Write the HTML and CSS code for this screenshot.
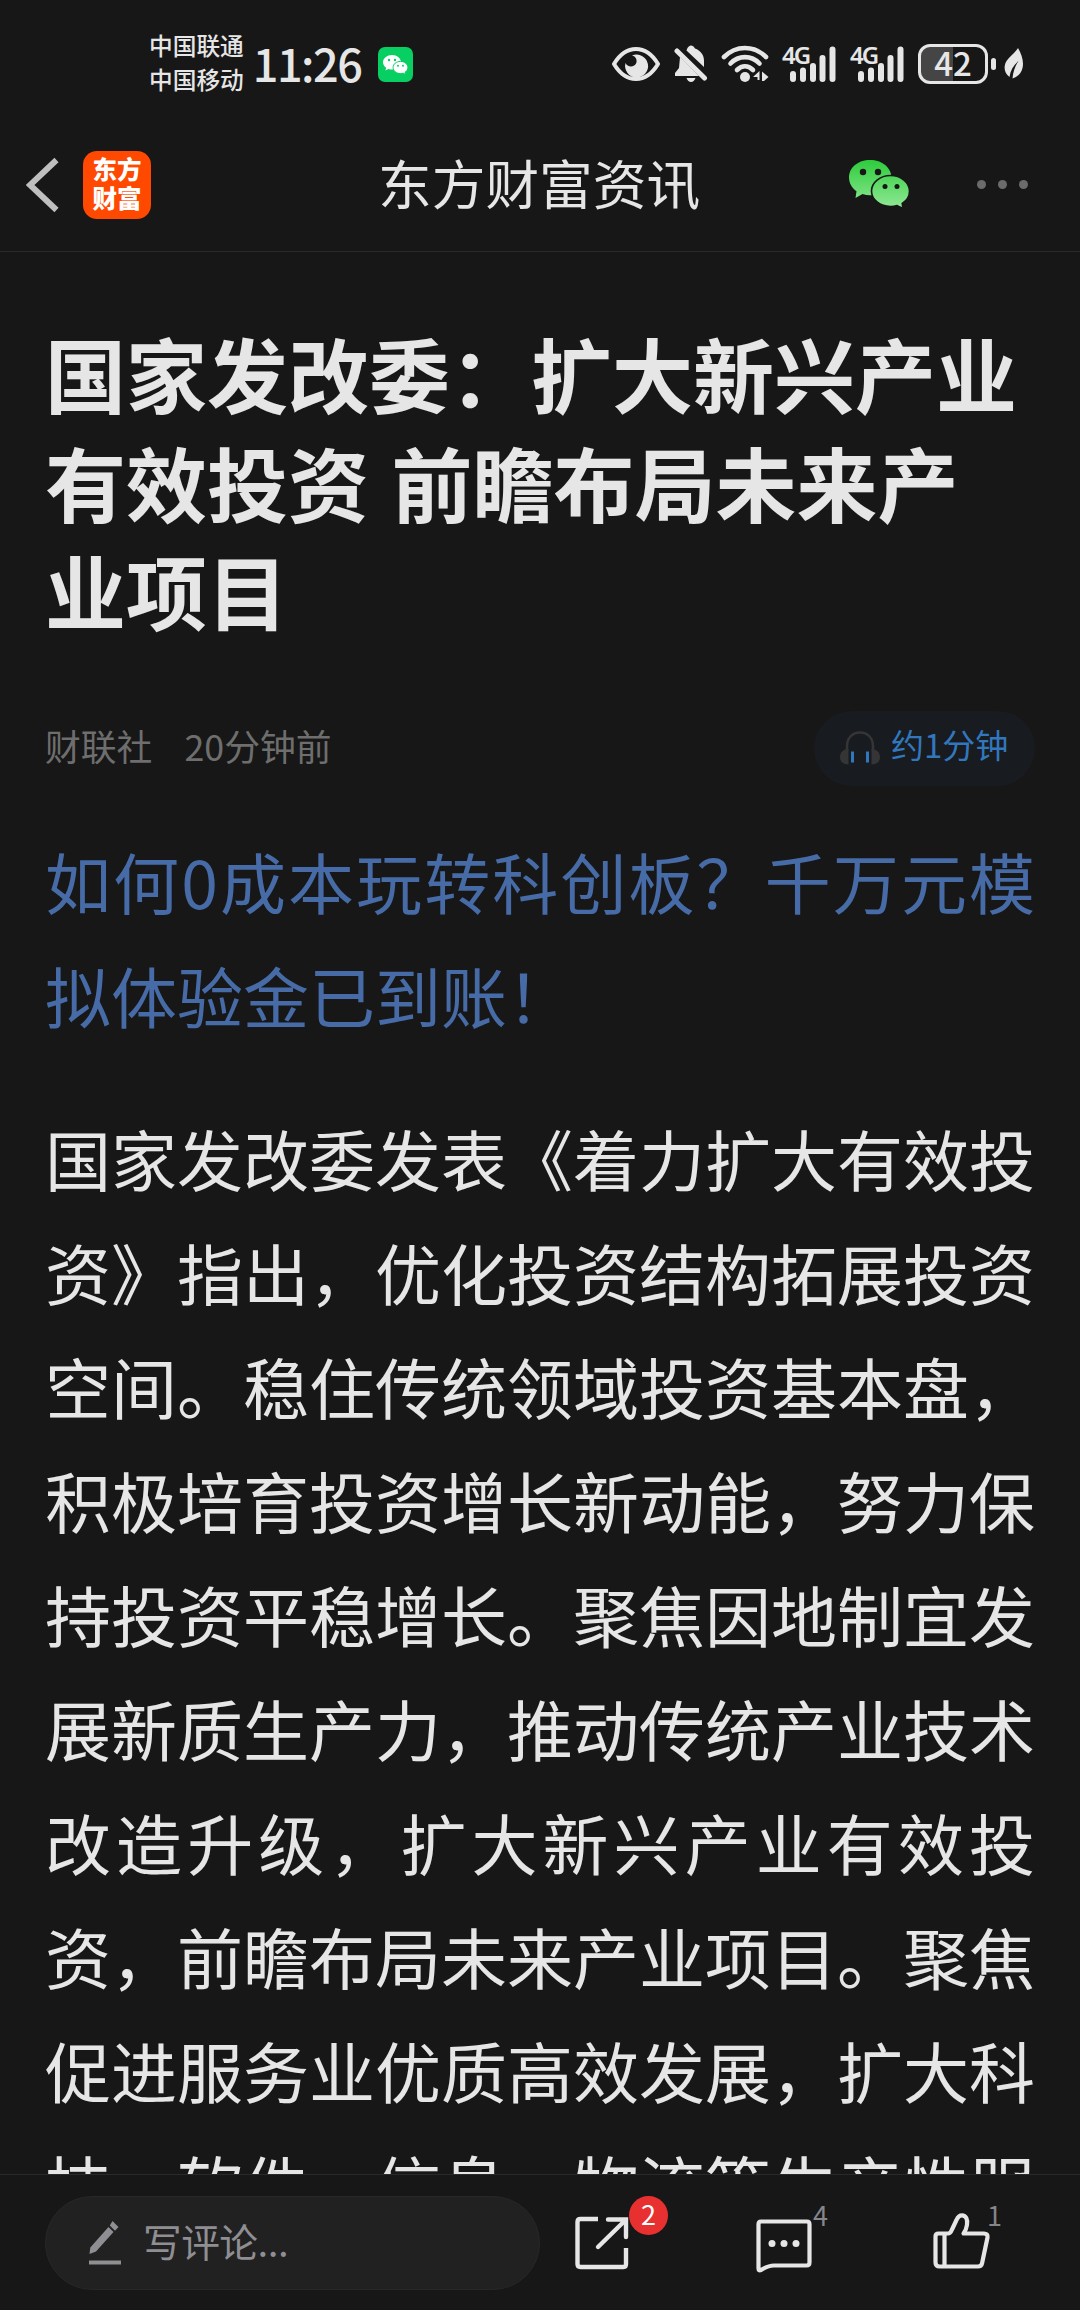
FILE: index.html
```
<!DOCTYPE html>
<html lang="zh-CN">
<head>
    <meta charset="UTF-8">
    <meta name="viewport" content="width=device-width, initial-scale=1.0">
    <title>东方财富资讯</title>
    <link rel="stylesheet" href="styles.css">
</head>
<body>
    <div class="status">
        <div class="carrier">中国联通<br>中国移动</div>
        <div class="clock">11:26</div>
        <svg class="wx-app" width="35" height="35" viewBox="0 0 35 35">
            <rect width="35" height="35" rx="7" fill="#07cf62"/>
            <path d="M14 8c-5 0-9 3.300-9 7.300 0 2.200 1.200 4.200 3.200 5.500l-.8 2.700 3-1.600c1.200.4 2.400.5 3.600.5 5 0 9-3.200 9-7.100S19 8 14 8z" fill="#fff"/>
            <path d="M22.500 14.400c-4.200 0-7.400 2.700-7.400 6.100s3.200 6.100 7.400 6.100c.9 0 1.800-.1 2.600-.4l2.500 1.300-.6-2.200c1.800-1.100 2.900-2.800 2.900-4.800 0-3.400-3.300-6.100-7.400-6.100z" fill="#fff" stroke="#07cf62"/>
            <g fill="#07cf62"><circle cx="11" cy="13" r="1.200"/><circle cx="17" cy="13" r="1.200"/><circle cx="20" cy="18.800" r="1"/><circle cx="25" cy="18.800" r="1"/></g>
        </svg>
        <div class="status-icons">
            <svg class="eye" width="48" height="34" viewBox="0 0 48 34">
                <path d="M2 17C8 7 15 2 24 2s16 5 22 15c-6 10-13 15-22 15S8 27 2 17z" fill="none" stroke="#e6e6e6" stroke-width="4" stroke-linejoin="round"/>
                <path d="M20 8.500a11.500 11.500 0 1 1-6.500 7.500c1 2 3 3.500 5.500 3.500a5.500 5.500 0 0 0 5-8c-.7-1.500-2-2.600-4-3z" fill="#e6e6e6"/>
            </svg>
            <svg class="bell" width="34" height="38" viewBox="0 0 34 38">
                <path d="M6 12l19 19H1v-3l4-5zM13 4c1-2.200 2.500-3.500 4-3.500S20 1.500 21 3.500c5.500 2 9 6.500 9 12V22L12.500 5.500z" fill="#e6e6e6"/>
                <path d="M3 6l27.500 27" stroke="#e6e6e6" stroke-width="5" stroke-linecap="round"/>
                <path d="M12.500 33h9c-1 2.500-2.500 4-4.500 4s-3.500-1.500-4.500-4z" fill="#e6e6e6"/>
            </svg>
            <svg class="wifi" width="48" height="38" viewBox="0 0 48 38">
                <g fill="none" stroke="#e6e6e6" stroke-width="4.600" stroke-linecap="round">
                    <path d="M3 12c12-12 30-12 42 0"/>
                    <path d="M9.500 18.500c8-8.500 21-8.500 29 0"/>
                    <path d="M16 25c5-5 11-5 16 0"/>
                </g>
                <circle cx="24" cy="32" r="5" fill="#e6e6e6"/>
                <path d="M38.500 26v9h-2v-3h-4.500zM41 26.500l6.500 5.500-4.500 4h-2z" fill="#e6e6e6"/>
            </svg>
            <div class="signal">
                <span>4G</span>
                <svg width="54" height="37" viewBox="0 0 54 37">
                    <path d="M11 28v5M21 24.500v8.500M31 20v13M40.500 12v21M50.500 3.500v29.500" stroke="#e6e6e6" stroke-width="6" stroke-linecap="round"/>
                </svg>
            </div>
            <div class="signal">
                <span>4G</span>
                <svg width="54" height="37" viewBox="0 0 54 37">
                    <path d="M11 28v5M21 24.500v8.500M31 20v13M40.500 12v21M50.500 3.500v29.500" stroke="#e6e6e6" stroke-width="6" stroke-linecap="round"/>
                </svg>
            </div>
            <div class="battery">42</div>
            <div class="battery-tip"></div>
            <svg class="leaf" width="20" height="32" viewBox="0 0 20 32">
                <path d="M14 0c4 7 6 14 4.500 20C17.500 25 13.500 29 8.500 30.500 9 24 11 18 14.500 13 9.500 17 6.500 22 5.500 29 1.500 26 0 22 .8 17.500 2 10.500 9.500 7 14 0z" fill="#e6e6e6"/>
            </svg>
        </div>
    </div>

    <header class="header">
        <svg class="back" width="34" height="56" viewBox="0 0 34 56">
            <path d="M30.500 3L4 28l26.500 25" fill="none" stroke="#bfbfbf" stroke-width="6"/>
        </svg>
        <div class="logo">东方<br>财富</div>
        <h1 class="name">东方财富资讯</h1>
        <svg class="wechat" width="62" height="50" viewBox="0 0 62 50">
            <defs>
                <linearGradient id="green" x1="0" y1="0" x2="0" y2="50" gradientUnits="userSpaceOnUse">
                    <stop offset="0" stop-color="#2bcb3a"/>
                    <stop offset="1" stop-color="#93e997"/>
                </linearGradient>
            </defs>
            <path d="M22 1C10 1 1 8.500 1 18.500c0 5.500 3 10.500 7.500 13.700L7.500 39l7-4c2.500.8 5 1.200 7.500 1.200 12 0 21.500-7.500 21.500-17.500S34 1 22 1z" fill="url(#green)"/>
            <path d="M42.500 16.500c-10.500 0-19 7-19 15.500s8.500 15.500 19 15.500c2.300 0 4.500-.3 6.500-1l6 3-.8-5c4.500-2.800 7.300-7.300 7.300-12.500 0-8.500-8.500-15.500-19-15.500z" fill="url(#green)" stroke="#171717" stroke-width="1.600"/>
            <g fill="#171717"><circle cx="15" cy="13" r="3.200"/><circle cx="30" cy="13" r="3.200"/><circle cx="37" cy="27.500" r="2.500"/><circle cx="49" cy="27.500" r="2.500"/></g>
        </svg>
        <div class="more"><i></i><i></i><i></i></div>
    </header>

    <main class="article">
        <h2 class="title">国家发改委：扩大新兴产业有效投资 前瞻布局未来产业项目</h2>
        <div class="meta">
            <span class="source">财联社</span>
            <span class="ago">20分钟前</span>
            <div class="listen">
                <svg width="40" height="34" viewBox="0 0 40 34">
                    <path d="M7 20v-5C7 7 12.500 1.500 20 1.500S33 7 33 15v5" fill="none" stroke="#353535" stroke-width="2.500"/>
                    <path d="M8.500 18C3 18.500 0 21.500 0 26s3 7.500 8.500 7.500zM31.500 18c5.500.5 8.500 3.500 8.500 8s-3 7.500-8.500 7.500z" fill="#353535"/>
                    <path d="M12.500 20.500v11M27.500 20.500v11" stroke="#3277bd" stroke-width="3"/>
                </svg>
                <span>约1分钟</span>
            </div>
        </div>
        <p class="ad">如何0成本玩转科创板？千万元模拟体验金已到账！</p>
        <p class="text">国家发改委发表《着力扩大有效投资》指出，优化投资结构拓展投资空间。稳住传统领域投资基本盘，积极培育投资增长新动能，努力保持投资平稳增长。聚焦因地制宜发展新质生产力，推动传统产业技术改造升级，扩大新兴产业有效投资，前瞻布局未来产业项目。聚焦促进服务业优质高效发展，扩大科技、软件、信息、物流等生产性服</p>
    </main>

    <footer class="bar">
        <div class="input">
            <svg width="34" height="46" viewBox="0 0 34 46">
                <path d="M20.500 7l5 5L8 31.500 1.500 34l.8-6.500zM24.500 1l6 6-3.500 3.800-5.200-5.400z" fill="#8e8e93"/>
                <path d="M1 42.500h32" stroke="#8e8e93" stroke-width="4"/>
            </svg>
            <span>写评论...</span>
        </div>
        <div class="action share">
            <svg width="54" height="54" viewBox="0 0 54 54">
                <path d="M23 3H5.500Q2.500 3 2.500 6v42q0 3 3 3h43q2.500 0 2.500-3V32" fill="none" stroke="#e6e6e6" stroke-width="4.400"/>
                <path d="M33 3.500h18V21M50 4.500L23 31" fill="none" stroke="#e6e6e6" stroke-width="4.400" stroke-linecap="round"/>
            </svg>
            <b class="badge">2</b>
        </div>
        <div class="action comment">
            <svg width="56" height="54" viewBox="0 0 56 54">
                <path d="M5 2.500h46q2.500 0 2.500 3v38q0 3-3 3H18c-6 0-9 2-13 4.500q-2.500 1-2.500-1.500V5.500q0-3 2.500-3z" fill="none" stroke="#e6e6e6" stroke-width="4.200"/>
                <g fill="#e6e6e6"><circle cx="16" cy="24.500" r="3.500"/><circle cx="28" cy="24.500" r="3.500"/><circle cx="40" cy="24.500" r="3.500"/></g>
            </svg>
            <span class="count">4</span>
        </div>
        <div class="action like">
            <svg width="57" height="56" viewBox="0 0 57 56">
                <g fill="none" stroke="#e6e6e6" stroke-width="4.200" stroke-linejoin="round">
                    <path d="M5.500 20.500H15c2 0 3-1.500 4-4l4.500-9.500c1.500-3.500 3-4.700 5.500-4.700 4 0 5.800 4 5 9.500-.5 4-1.500 6-3.500 8.700H51q4 0 3.500 4l-5.500 26q-.7 3-4 3H6.500q-4 0-4-4v-26q0-3 3-3z"/>
                    <path d="M11.500 21v32"/>
                </g>
            </svg>
            <span class="count">1</span>
        </div>
    </footer>
</body>
</html>
```
FILE: styles.css
```
*{
    box-sizing: border-box;
}
body{
    margin: 0;
    height: 2310px;
    display: flex;
    flex-direction: column;
    overflow: hidden;
    background-color: #171717;
    color: #e6e6e6;
    font-family: "Noto Sans CJK SC", sans-serif;
}
h1, h2, p{
    margin: 0;
}
svg{
    display: block;
    flex: none;
}

/* status bar */
.status{
    height: 118px;
    padding: 0 56px 0 149px;
    display: flex;
    align-items: flex-start;
    flex: none;
}
.carrier{
    margin-top: 28px;
    font-size: 23.7px;
    font-weight: 500;
    line-height: 34px;
    white-space: nowrap;
}
.clock{
    width: 121px;
    margin: 35px 0 0 9px;
    font-size: 45px;
    font-weight: 500;
    line-height: 56px;
    letter-spacing: -1.5px;
}
.wx-app{
    margin: 47px 0 0 4px;
}
.status-icons{
    margin: 44px 0 0 auto;
    height: 40px;
    display: flex;
    align-items: center;
}
.eye{
    margin-right: 14px;
}
.bell{
    margin-right: 13px;
}
.wifi{
    margin-right: 13px;
}
.signal{
    position: relative;
    margin-right: 14px;
}
.signal span{
    position: absolute;
    left: 0;
    top: -4px;
    font-family: "Noto Sans", sans-serif;
    font-size: 24px;
    font-weight: 600;
    line-height: 26px;
    letter-spacing: -2px;
}
.battery{
    width: 70px;
    height: 40px;
    border: 3px solid #e6e6e6;
    border-radius: 12px;
    background: linear-gradient(to right, #454545 50%, transparent 50%);
    font-size: 33px;
    font-weight: 500;
    line-height: 31px;
    text-align: center;
}
.battery-tip{
    width: 5px;
    height: 12px;
    margin: 0 8px 0 3px;
    border-radius: 3px;
    background-color: #e6e6e6;
}

/* header */
.header{
    height: 134px;
    padding: 0 52px 0 26px;
    display: flex;
    align-items: center;
    border-bottom: 1px solid #2a2a2a;
    flex: none;
}
.logo{
    width: 68px;
    height: 68px;
    margin-left: 23px;
    padding-top: 3px;
    border-radius: 14px;
    background-color: #ff4800;
    color: #fff;
    font-size: 24.5px;
    font-weight: 900;
    line-height: 29px;
    text-align: center;
}
.name{
    margin: 0 0 5px 227px;
    font-size: 53.7px;
    font-weight: 400;
    line-height: 70px;
    white-space: nowrap;
}
.wechat{
    margin: 0 0 2px 148px;
}
.more{
    margin-left: auto;
    display: flex;
    gap: 12px;
}
.more i{
    width: 9px;
    height: 9px;
    border-radius: 50%;
    background-color: #6b6b6b;
}

/* article */
.article{
    flex: 1;
    min-height: 0;
    overflow: hidden;
    padding: 66px 45px 0;
}
.title{
    font-size: 81px;
    font-weight: 700;
    line-height: 108.5px;
    word-spacing: 4px;
}
.meta{
    height: 75px;
    margin-top: 67px;
    display: flex;
    align-items: center;
    color: #6e6e6e;
    font-size: 35.8px;
}
.source, .ago{
    padding-bottom: 6px;
}
.ago{
    margin-left: 32px;
}
.listen{
    width: 221px;
    height: 75px;
    margin-left: auto;
    padding-left: 26px;
    display: flex;
    align-items: center;
    gap: 11px;
    border-radius: 38px;
    background-color: #181b1f;
    color: #3277bd;
    font-size: 33px;
}
.listen span{
    padding-bottom: 8px;
}
.ad, .text{
    font-size: 66px;
    line-height: 114px;
    text-align: justify;
    text-spacing-trim: space-all;
}
.ad{
    margin-top: 37px;
    color: #466ba6;
}
.text{
    margin-top: 49px;
}

/* bottom bar */
.bar{
    height: 136px;
    padding: 21px 45px 0;
    display: flex;
    align-items: flex-start;
    border-top: 1px solid #2a2a2a;
    flex: none;
}
.input{
    width: 495px;
    height: 94px;
    padding-left: 42px;
    display: flex;
    align-items: center;
    gap: 21px;
    border: 1px solid #272727;
    border-radius: 47px;
    background-color: #212121;
    color: #8e8e93;
    font-size: 38.7px;
}
.input span{
    padding-bottom: 6px;
    letter-spacing: -0.5px;
}
.action{
    position: relative;
}
.share{
    margin: 20px 0 0 35px;
}
.comment{
    margin: 23px 0 0 127px;
}
.like{
    margin: 17px 0 0 121px;
}
.badge{
    position: absolute;
    left: 54px;
    top: -20px;
    width: 39px;
    height: 39px;
    border-radius: 50%;
    background-color: #e83030;
    color: #fff;
    font-size: 27px;
    font-weight: 400;
    line-height: 35px;
    text-align: center;
}
.count{
    position: absolute;
    left: 57px;
    top: -21px;
    color: #85858a;
    font-size: 27px;
    line-height: 34px;
}
.like .count{
    left: 54px;
    top: -15px;
}
```
